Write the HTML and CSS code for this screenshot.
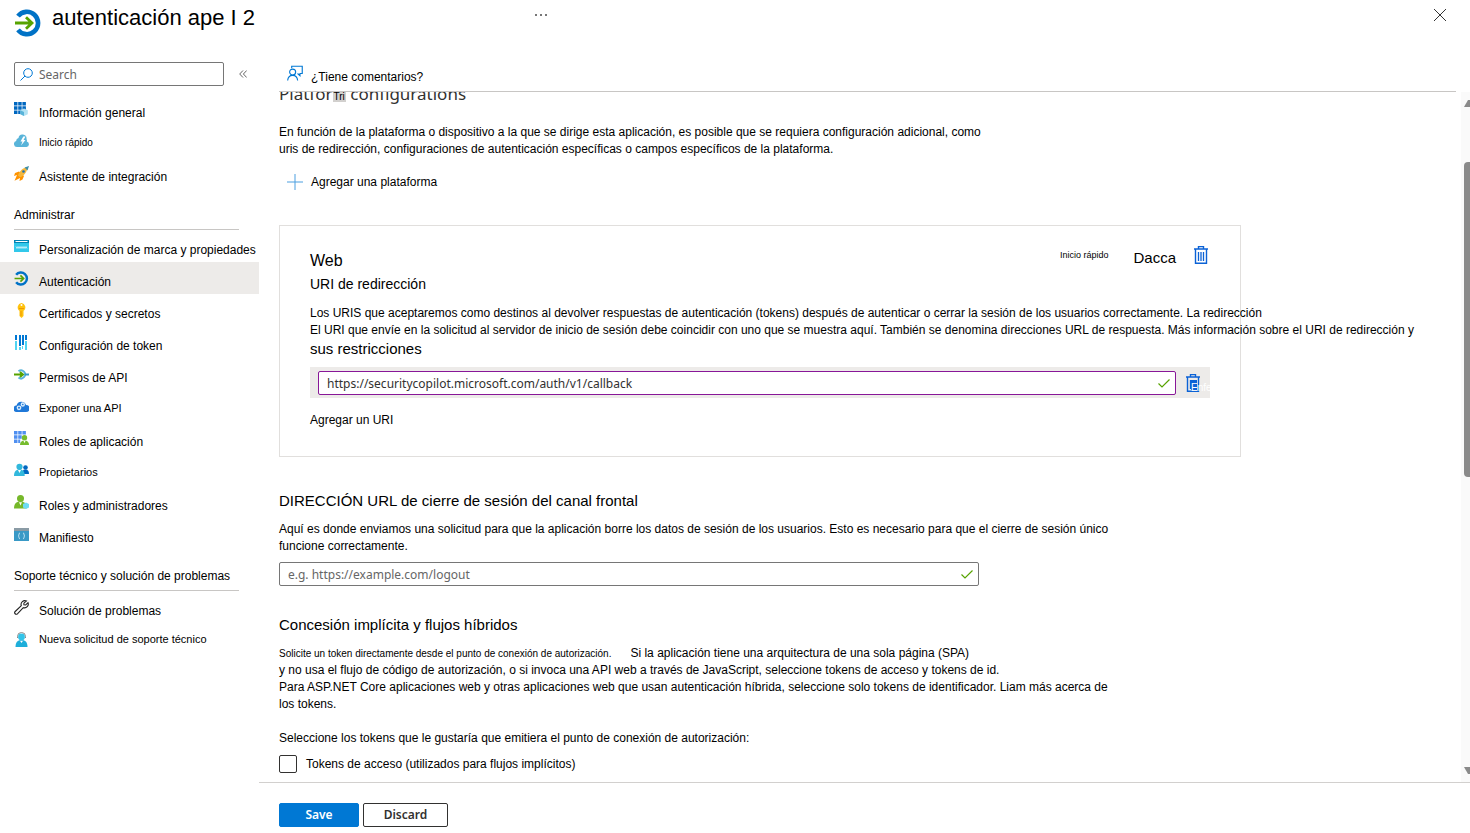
FILE: index.html
```html
<!DOCTYPE html>
<html lang="es">
<head>
  <meta charset="UTF-8">
  <meta name="viewport" content="width=device-width, initial-scale=1.0">
  <title>autenticación ape I 2</title>
  <link rel="stylesheet" href="styles.css">
</head>
<body>
  <div class="page">
    <!-- Cabecera -->
    <header class="header">
      <svg class="header-icon" viewBox="0 0 28 28" fill="none">
        <path d="M4 7.2A11.2 11.2 0 1 1 4 20.8" stroke="#0072c6" stroke-width="4.6"/>
        <path d="M1 14h16M12 8.2l6 5.8-6 5.8" stroke="#57a300" stroke-width="2.8"/>
      </svg>
      <h1>autenticación ape I 2</h1>
      <button class="more" aria-label="Más"><svg width="12" height="2" viewBox="0 0 12 2" fill="#777"><path d="M0 0h2v2H0zM5 0h2v2H5zM10 0h2v2h-2z"/></svg></button>
      <button class="close" aria-label="Cerrar"><svg width="12" height="12" viewBox="0 0 12 12" fill="none" stroke="#333"><path d="M0 0l12 12M12 0L0 12"/></svg></button>
    </header>

    <div class="body">
      <!-- Menú lateral -->
      <nav class="sidebar">
        <div class="search-row">
          <label class="search">
            <svg width="13" height="13" viewBox="0 0 13 13" fill="none" stroke="#0078d4"><circle cx="8" cy="5" r="4.3"/><path d="M5 8L.5 12.5"/></svg>
            <input type="text" placeholder="Search" aria-label="Search">
          </label>
          <button class="collapse" aria-label="Contraer"><svg width="8" height="8" viewBox="0 0 8 8" fill="none" stroke="#666"><path d="M4 .5L.7 4 4 7.5M7.7.5L4.4 4l3.300 3.500"/></svg></button>
        </div>

        <a class="item" href="#">
          <svg viewBox="0 0 15 15"><path fill="#0067c0" d="M0 0h3.5v3.5H0zM4.2 0h3.500v3.500H4.200zM8.400 0h3.500v3.500H8.400zM0 4.200h3.500v3.500H0zM4.200 4.200h3.500v3.500H4.200zM8.400 4.200h3.500v3.500H8.400zM0 8.400h3.500v3.500H0zM4.200 8.400h3.500v3.500H4.200z"/><path fill="#b3e2f3" d="M10 6.500l3.800 1.800v4L10 14l-3.600-1.700v-4z"/><path fill="#59b4d9" d="M6.400 8.300L10 10v4l-3.600-1.700z"/></svg>
          <span>Información general</span>
        </a>
        <a class="item" href="#">
          <svg viewBox="0 0 15 15"><path fill="#59b4d9" d="M3 13a3 3 0 0 1-.8-5.900A3 3 0 0 1 4.500 4 4 4 0 0 1 12.500 5a3 3 0 0 1 .3 2.500A2.800 2.800 0 0 1 12.500 13z"/><path fill="#fff" d="M9.300 2.500L6.500 7.500h2L7 11.500l4.500-5.500H9.500l2-3.500z"/></svg>
          <span class="small">Inicio rápido</span>
        </a>
        <a class="item" href="#">
          <svg viewBox="0 0 15 15"><path fill="#ff9300" d="M5 5.500L1 7 0 10l3-1-2.500 5.800L6 12l-.5 3 3-1.500L10 10z"/><path fill="#f5b73c" d="M13.500 1.500C9 1.500 5.500 5 4 9.500L6 11.300C10 10 13 6 13.500 1.500z"/><path fill="#3f8fa8" d="M15 0l-4.500 1.400L13.500 4.500z"/><circle cx="9.500" cy="5.500" r="1.300" fill="#1d73b5"/></svg>
          <span>Asistente de integración</span>
        </a>

        <h2 class="group">Administrar</h2>
        <a class="item" href="#">
          <svg viewBox="0 0 15 15"><path fill="#32c8ea" d="M0 2h15v11H0z"/><path fill="#0084b4" d="M0 1h15v3H0z"/><path fill="#fff" d="M1.500 2h12v1h-12z"/><path d="M2 7.500l1 2 1-2 1 2 1-2 1 2 1-2 1 2 1-2 1 2 1-2 1 2" fill="none" stroke="#d8f5fb" stroke-width=".8"/></svg>
          <span>Personalización de marca y propiedades</span>
        </a>
        <a class="item active" href="#">
          <svg viewBox="0 0 28 28" fill="none"><path d="M4 7.200A11.200 11.200 0 1 1 4 20.800" stroke="#0072c6" stroke-width="4.600"/><path d="M1 14h16M12 8.200l6 5.800-6 5.800" stroke="#57a300" stroke-width="3"/></svg>
          <span>Autenticación</span>
        </a>
        <a class="item" href="#">
          <svg viewBox="0 0 15 15"><path fill="#ffc20e" d="M7.500 0a4.300 4.300 0 0 1 2 7.800V13l-2 2-2-2V7.800A4.300 4.300 0 0 1 7.500 0z"/><circle cx="7.500" cy="2" r="1" fill="#fff"/><path stroke="#f09a00" d="M5 5.500h5M7 8v5"/></svg>
          <span>Certificados y secretos</span>
        </a>
        <a class="item" href="#">
          <svg viewBox="0 0 15 15"><path fill="#0078d4" d="M1 0h2v5H1zM5 0h2v11H5zM8 0h2v10H8zM11 0h2v5h-2z"/><path fill="#50d5f2" d="M1 6h2v9H1zM5 12h2v3H5zM8 11h1v3H8zM11 6h2v9h-2z"/></svg>
          <span>Configuración de token</span>
        </a>
        <a class="item" href="#">
          <svg viewBox="0 0 15 15" fill="none"><path d="M4.500 4.300a4 4 0 1 1 0 6.200" stroke="#59b4d9" stroke-width="2"/><path d="M11 7.500h4" stroke="#3999c6" stroke-width="2"/><path d="M0 7.500h8M6 5l3 2.500L6 10" stroke="#57a300" stroke-width="2"/></svg>
          <span>Permisos de API</span>
        </a>
        <a class="item" href="#">
          <svg viewBox="0 0 15 15"><path fill="#1f78d8" d="M3 13A3 3 0 0 1 2.500 6.500 5 5 0 0 1 12 6a3.500 3.500 0 0 1 0 7z"/><g fill="none" stroke="#d5eafc" stroke-width="1.400"><circle cx="5" cy="8.800" r="1.700"/><circle cx="8.800" cy="5.500" r="1.500"/></g></svg>
          <span class="medium">Exponer una API</span>
        </a>
        <a class="item" href="#">
          <svg viewBox="0 0 15 15"><path fill="#4f8ff0" d="M0 0h3.500v3.500H0zM4.200 0h3.500v3.500H4.200zM8.400 0h3.500v3.500H8.400zM0 4.200h3.500v3.500H0zM4.200 4.200h3.500v3.500H4.200zM0 8.400h3.500v3.500H0zM4.200 8.400h2v3.500h-2z"/><circle cx="10.500" cy="6.800" r="2.700" fill="#76bc2d"/><path fill="#76bc2d" d="M6 14c0-3 1.500-4.500 4.500-4.500S15 11 15 14z"/><path fill="#fff" d="M9.300 9.500h2.400l-1.200 2.500z"/></svg>
          <span>Roles de aplicación</span>
        </a>
        <a class="item" href="#">
          <svg viewBox="0 0 15 15"><g fill="#0067c0"><circle cx="11.500" cy="4.500" r="2.300"/><path d="M8 11c0-3 1-4.500 3.500-4.500S15 8 15 11z"/></g><g fill="#32b8dc"><circle cx="5.500" cy="3.800" r="3.100"/><path d="M0 13c0-4 1.500-6.500 5.500-6.500s5.200 2.500 5.200 6.500z"/></g><path fill="#fff" d="M4 7h3l-1.500 3z"/></svg>
          <span class="medium">Propietarios</span>
        </a>
        <a class="item" href="#">
          <svg viewBox="0 0 15 15"><g fill="#76b82a"><circle cx="6.500" cy="3.500" r="3.500"/><path d="M0 13.500C0 9 2 6.500 6.500 6.500s6 2.500 6 7z"/></g><path fill="#fff" d="M5 7.200h3l-1.500 3.300z"/><path fill="#6fdcf2" d="M12 7.500l3 1.500v3.500l-3 1.500-3-1.500V9z"/></svg>
          <span>Roles y administradores</span>
        </a>
        <a class="item" href="#">
          <svg viewBox="0 0 15 15"><path fill="#3999c6" d="M0 1h15v13H0z"/><path fill="#8a9ba5" d="M0 1h15v3H0z"/><path d="M6 6q-1 0-1 1.200T4.200 9q.8.500.8 1.500T6 12M9 6q1 0 1 1.200T10.800 9q-.8.500-.8 1.500T9 12" fill="none" stroke="#d7effa" stroke-width=".9"/></svg>
          <span>Manifiesto</span>
        </a>

        <h2 class="group">Soporte técnico y solución de problemas</h2>
        <a class="item" href="#">
          <svg viewBox="0 0 15 15" fill="none" stroke="#222" stroke-width="1.100"><path d="M12.500 1A3.800 3.800 0 0 0 7.300 5.700L1.200 11.500a1.500 1.500 0 0 0 2.200 2.300l5.900-6.100A3.800 3.800 0 0 0 14 2.700L11.700 5 9.900 4.800 9.900 3.200z"/></svg>
          <span>Solución de problemas</span>
        </a>
        <a class="item" href="#">
          <svg viewBox="0 0 15 15"><path d="M3.500 6V4.500a4 4 0 0 1 8 0V6" fill="none" stroke="#888"/><circle cx="7.500" cy="5" r="3.400" fill="#32c3e8"/><path fill="#1eaeda" d="M1.500 15c0-4.500 2-7 6-7s6 2.500 6 7z"/><path fill="#fff" d="M6 8.700h3L7.500 11z"/></svg>
          <span class="support">Nueva solicitud de soporte técnico</span>
        </a>
      </nav>

      <!-- Contenido principal -->
      <main class="main">
        <div class="toolbar">
          <button class="command">
            <svg width="16" height="17" viewBox="0 0 17 17" fill="none" stroke="#0078d4" stroke-width="1.200"><path d="M5 3V.8h11.200v7.700h-2.400v2.300l-2.600-2.300"/><circle cx="6" cy="7" r="3.200"/><path d="M.7 16c.3-3.500 2.200-5.500 5.300-5.500s5 2 5.300 5.500"/></svg>
            <span>¿Tiene comentarios?</span>
          </button>
        </div>

        <div class="scroll-area">
          <div class="content">
            <h2 class="platform-title">Platfor<mark>Tri</mark> configurations</h2>
            <p class="intro">En función de la plataforma o dispositivo a la que se dirige esta aplicación, es posible que se requiera configuración adicional, como<br>uris de redirección, configuraciones de autenticación específicas o campos específicos de la plataforma.</p>
            <button class="command add-platform">
              <svg width="16" height="16" viewBox="0 0 16 16" stroke="#0078d4"><path d="M8 0v16M0 8h16"/></svg>
              <span>Agregar una plataforma</span>
            </button>

            <section class="card">
              <div class="card-head">
                <h3>Web</h3>
                <div class="card-actions">
                  <a class="quick" href="#">Inicio rápido</a>
                  <a class="docs" href="#">Dacca</a>
                  <button class="trash" aria-label="Eliminar"><svg width="14" height="18" viewBox="0 0 14 18" fill="none" stroke="#0b62d6"><path d="M0 3h14M4.500 2.500v-2h5v2M1.500 3v14.300h11V3" stroke-width="1.400"/><path d="M4.500 6v9M7 6v9M9.500 6v9" stroke-width="1.300"/></svg></button>
                </div>
              </div>
              <h4>URI de redirección</h4>
              <p class="uri-text">Los URIS que aceptaremos como destinos al devolver respuestas de autenticación (tokens) después de autenticar o cerrar la sesión de los usuarios correctamente. La redirección<br>El URI que envíe en la solicitud al servidor de inicio de sesión debe coincidir con uno que se muestra aquí. También se denomina direcciones URL de respuesta. Más información sobre el URI de redirección y</p>
              <p class="restrictions">sus restricciones</p>
              <div class="uri-row">
                <div class="field edited">
                  <input type="text" value="https://securitycopilot.microsoft.com/auth/v1/callback" aria-label="URI de redirección">
                  <svg width="12" height="9" viewBox="0 0 12 9" fill="none" stroke="#57a300" stroke-width="1.200"><path d="M.5 4.500L4 8l7.500-7.500"/></svg>
                </div>
                <button class="trash" aria-label="Eliminar URI"><svg width="14" height="18" viewBox="0 0 14 18" fill="none" stroke="#0b62d6"><path d="M0 3h14M4.500 2.500v-2h5v2M1.500 3v14.300h11V3" stroke-width="1.400"/><path d="M4.500 6v9" stroke-width="1.300"/><path d="M5 6h6v10H5z" fill="#0b62d6" stroke="none"/></svg><span class="trash-text">Enfe</span></button>
              </div>
              <a class="add-uri" href="#">Agregar un URI</a>
            </section>

            <h3 class="section-title">DIRECCIÓN URL de cierre de sesión del canal frontal</h3>
            <p class="section-text">Aquí es donde enviamos una solicitud para que la aplicación borre los datos de sesión de los usuarios. Esto es necesario para que el cierre de sesión único<br>funcione correctamente.</p>
            <div class="field logout">
              <input type="text" placeholder="e.g. https://example.com/logout" aria-label="URL de cierre de sesión">
              <svg width="12" height="9" viewBox="0 0 12 9" fill="none" stroke="#57a300" stroke-width="1.200"><path d="M.5 4.500L4 8l7.500-7.500"/></svg>
            </div>

            <h3 class="section-title grant-title">Concesión implícita y flujos híbridos</h3>
            <p class="section-text"><span class="lead">Solicite un token directamente desde el punto de conexión de autorización.</span>Si la aplicación tiene una arquitectura de una sola página (SPA)<br>y no usa el flujo de código de autorización, o si invoca una API web a través de JavaScript, seleccione tokens de acceso y tokens de id.<br>Para ASP.NET Core aplicaciones web y otras aplicaciones web que usan autenticación híbrida, seleccione solo tokens de identificador. Liam más acerca de<br>los tokens.</p>
            <p class="select-text">Seleccione los tokens que le gustaría que emitiera el punto de conexión de autorización:</p>
            <label class="check">
              <input type="checkbox">
              <span>Tokens de acceso (utilizados para flujos implícitos)</span>
            </label>
          </div>
          <div class="scrollbar">
            <svg class="arrow" width="10" height="7" viewBox="0 0 10 7" fill="#8a8a8a"><path d="M0 7l4-7h2l4 7z"/></svg>
            <div class="track"><div class="thumb"></div></div>
            <svg class="arrow" width="10" height="7" viewBox="0 0 10 7" fill="#8a8a8a"><path d="M0 0l4 7h2l4-7z"/></svg>
          </div>
        </div>

        <footer class="footer">
          <button class="button primary">Save</button>
          <button class="button">Discard</button>
        </footer>
      </main>
    </div>
  </div>
</body>
</html>
```
FILE: styles.css
```css
/* Reset básico */
* {
  margin: 0;
  padding: 0;
  box-sizing: border-box;
}
html, body {
  height: 100%;
}
body {
  background: #fff;
  color: #000;
  font-family: "Liberation Sans", Arial, sans-serif;
  font-size: 12px;
  line-height: 17px;
}
a {
  color: inherit;
  text-decoration: none;
}
button {
  background: none;
  border: none;
  color: inherit;
  font: inherit;
  cursor: pointer;
}
svg {
  display: block;
  flex-shrink: 0;
}
h1, h2, h3, h4 {
  font-weight: normal;
}
.page {
  display: flex;
  flex-direction: column;
  height: 100vh;
  overflow: hidden;
}

/* Cabecera */
.header {
  position: relative;
  display: flex;
  align-items: flex-start;
  height: 60px;
  padding: 6px 24px 0 14px;
}
.header-icon {
  width: 28px;
  height: 28px;
  margin-top: 3px;
}
.header h1 {
  margin-left: 10px;
  font-size: 22px;
  line-height: 24px;
}
.more {
  position: absolute;
  top: 14px;
  left: 535px;
}
.close {
  margin: 3px 0 0 auto;
}

/* Menú lateral */
.body {
  display: flex;
  flex: 1;
  min-height: 0;
}
.sidebar {
  width: 259px;
  flex-shrink: 0;
  white-space: nowrap;
}
.search-row {
  display: flex;
  align-items: center;
  gap: 15px;
  padding: 2px 0 7px 14px;
}
.search {
  display: flex;
  align-items: center;
  gap: 6px;
  width: 210px;
  height: 24px;
  padding: 0 5px;
  border: 1px solid #767676;
  border-radius: 2px;
}
.search input {
  width: 100%;
  border: none;
  outline: none;
  font: 12px "Noto Sans", sans-serif;
}
::placeholder {
  color: #666;
  opacity: 1;
}
.item {
  display: flex;
  align-items: center;
  gap: 10px;
  height: 32px;
  padding-left: 14px;
}
.item svg {
  width: 15px;
  height: 15px;
}
.item span {
  padding-top: 8px;
}
.item .small {
  padding-top: 2px;
  font-size: 10px;
}
.item .medium {
  padding-top: 5px;
  font-size: 11px;
}
.item .support {
  padding-top: 0;
  font-size: 11px;
}
.item.active {
  background: #edebe9;
}
.group {
  height: 41px;
  margin: 0 20px 0 14px;
  padding-top: 18px;
  border-bottom: 1px solid #c8c6c4;
  font-size: 12px;
}

/* Contenido principal */
.main {
  display: flex;
  flex-direction: column;
  flex: 1;
  min-width: 0;
}
.toolbar {
  height: 32px;
  margin: 0 14px 0 20px;
  border-bottom: 1px solid #c8c6c4;
}
.command {
  display: flex;
  align-items: center;
  gap: 8px;
  height: 24px;
  padding-left: 8px;
}
.toolbar .command {
  height: 27px;
}
.toolbar .command span {
  padding-top: 7px;
}
.scroll-area {
  display: flex;
  flex: 1;
  min-height: 0;
  overflow: hidden;
}
.content {
  flex: 1;
  min-width: 0;
  padding-left: 20px;
  white-space: nowrap;
}
.platform-title {
  margin-top: -10px;
  color: #323130;
  font: 17px/24px "Noto Sans", sans-serif;
}
.platform-title mark {
  padding: 0 1px;
  background: #d2d0ce;
  font: 10px "Liberation Sans", Arial, sans-serif;
}
.intro {
  margin-top: 18px;
}
.add-platform {
  margin-top: 12px;
}
.add-platform svg {
  opacity: 0.7;
}

/* Tarjeta Web */
.card {
  max-width: 962px;
  margin-top: 31px;
  padding: 22px 30px 27px;
  border: 1px solid #e1dfdd;
}
.card-head {
  display: flex;
  justify-content: space-between;
}
.card-head h3 {
  font-size: 16px;
  line-height: 25px;
}
.card-actions {
  display: flex;
  align-items: center;
  gap: 18px;
  height: 14px;
  padding-right: 2px;
}
.quick {
  margin-right: 7px;
  font-size: 9px;
}
.docs {
  padding-top: 4px;
  font-size: 15px;
}
.trash {
  position: relative;
}
.trash-text {
  position: absolute;
  top: 5px;
  left: 5px;
  color: #fff;
  font-size: 10px;
}
.card h4 {
  font-size: 14px;
  line-height: 22px;
}
.uri-text {
  margin-top: 10px;
}
.restrictions {
  font-size: 15px;
  line-height: 20px;
}
.uri-row {
  display: flex;
  align-items: center;
  gap: 10px;
  margin-top: 8px;
  padding: 4px 10px 3px 8px;
  background: #edebe9;
}
.field {
  display: flex;
  align-items: center;
  flex: 1;
  height: 24px;
  padding: 0 5px 0 8px;
  background: #fff;
  border: 1px solid #767676;
  border-radius: 2px;
}
.field input {
  flex: 1;
  border: none;
  outline: none;
  color: #323130;
  font: 12px "Noto Sans", sans-serif;
}
.field.edited {
  border-color: #881798;
}
.add-uri {
  display: block;
  margin-top: 14px;
}

/* Secciones inferiores */
.section-title {
  margin-top: 34px;
  font-size: 15px;
  line-height: 20px;
}
.section-text {
  margin-top: 10px;
}
.logout {
  max-width: 700px;
  margin-top: 7px;
}
.grant-title {
  margin-top: 29px;
}
.lead {
  margin-right: 19px;
  font-size: 10px;
}
.select-text {
  margin-top: 17px;
}
.check {
  display: flex;
  align-items: center;
  gap: 9px;
  margin-top: 7px;
}
.check input {
  width: 18px;
  height: 18px;
  appearance: none;
  border: 1px solid #323130;
  border-radius: 2px;
}
.check span {
  padding-top: 2px;
}

/* Barra de desplazamiento */
.scrollbar {
  display: flex;
  flex-direction: column;
  width: 9px;
  padding: 8px 0 8px 3px;
  background: #fafafa;
  overflow: hidden;
}
.track {
  flex: 1;
  padding-top: 55px;
}
.thumb {
  width: 12px;
  height: 52%;
  background: #8a8a8a;
  border-radius: 4px;
}

/* Pie con botones */
.footer {
  display: flex;
  gap: 4px;
  height: 51px;
  padding: 20px 0 0 20px;
  border-top: 1px solid #d2d0ce;
}
.button {
  width: 85px;
  height: 24px;
  padding-bottom: 2px;
  border: 1px solid #323130;
  border-radius: 2px;
  color: #323130;
  font: 600 12px "Noto Sans", sans-serif;
}
.button.primary {
  width: 80px;
  background: #0078d4;
  border-color: #0078d4;
  color: #fff;
}
```
